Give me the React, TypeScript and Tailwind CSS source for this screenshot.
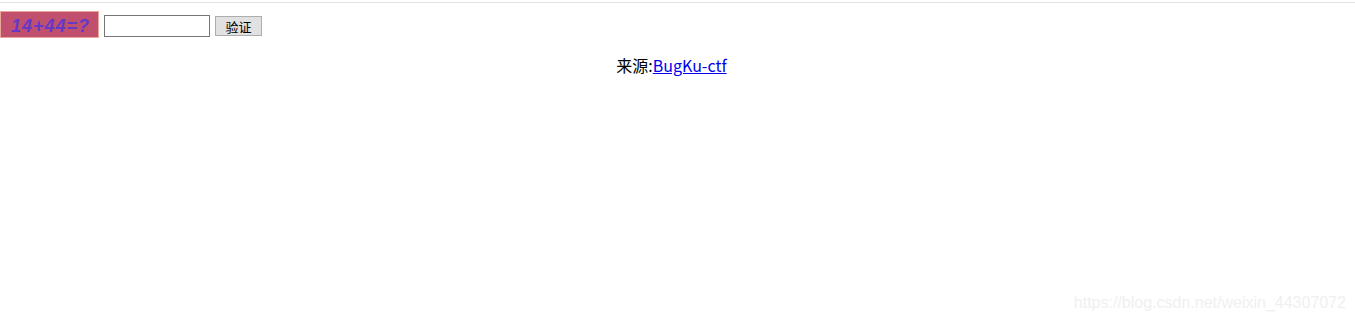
export default function App() {
  return (
    <div className="flex h-[325px] flex-col bg-white font-['Microsoft_YaHei','Noto_Sans_CJK_SC',sans-serif] text-black">
      <div className="mt-[2px] h-px w-full bg-[#e3e3e3]" />

      {/* captcha form */}
      <div className="mt-[8px] flex items-start">
        <div className="flex h-[27px] w-[99px] items-center justify-center border border-[#e8a898] bg-[#c0506e] pl-[2px] pt-[3px]">
          <span className="font-['Liberation_Sans',sans-serif] text-[18px] font-bold italic tracking-[1px] text-[#6438c8]">
            14+44=?
          </span>
        </div>
        <input
          type="text"
          className="ml-[5px] mt-[4px] h-[22px] w-[106px] border border-[#767676] bg-white px-1 text-[13px] outline-none"
        />
        <button className="ml-[5px] mt-[5px] h-[20px] w-[47px] border border-[#adadad] bg-[#e1e1e1] text-[13px] leading-none font-['Noto_Sans_CJK_SC',sans-serif]">
          验证
        </button>
      </div>

      <div className="mt-[17px] flex justify-center pr-[12px] text-[16px] leading-[20px]">
        <span>
          来源:
          <a href="#" className="text-[#0000ee] underline">
            BugKu-ctf
          </a>
        </span>
      </div>

      <div className="mt-auto mb-[10px] flex justify-end pr-[9px]">
        <span className="font-['Liberation_Sans',sans-serif] text-[16px] text-[#f0f0f0]">
          https://blog.csdn.net/weixin_44307072
        </span>
      </div>
    </div>
  )
}
